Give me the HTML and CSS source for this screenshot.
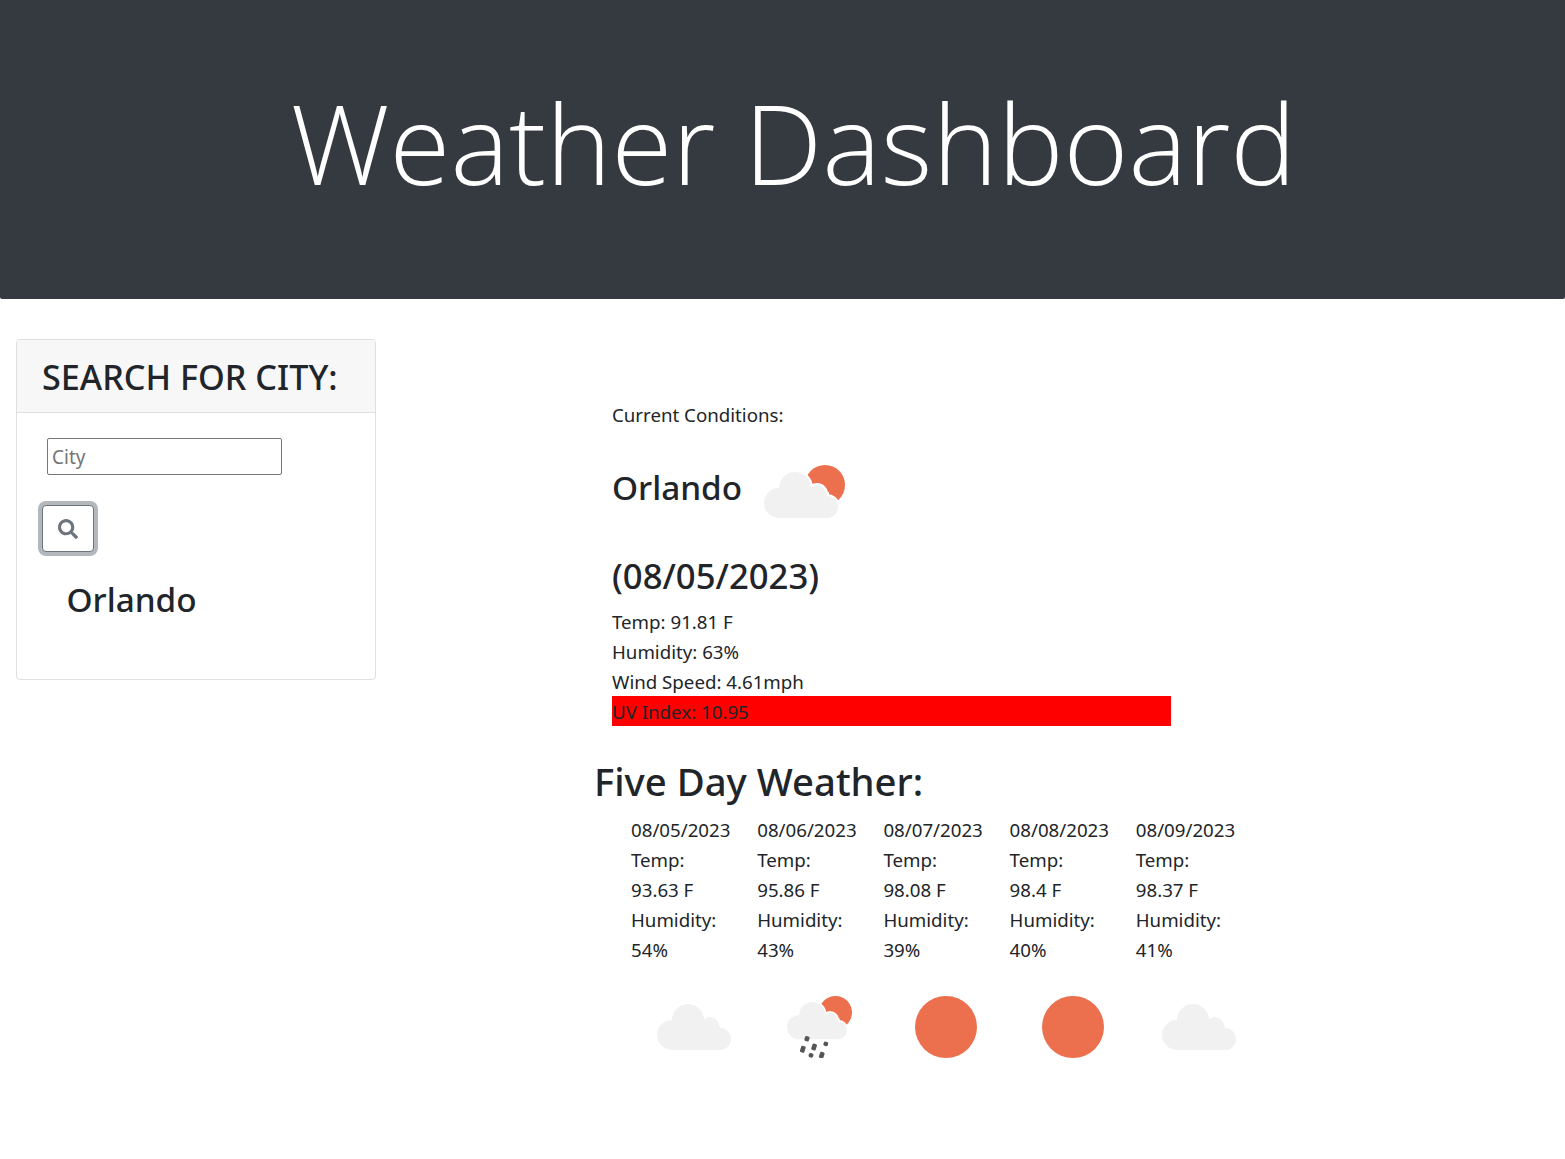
FILE: index.html
```html
<!DOCTYPE html>
<html lang="en">
<head>
  <meta charset="UTF-8">
  <meta name="viewport" content="width=device-width, initial-scale=1.0">
  <title>Weather Dashboard</title>
  <link rel="stylesheet" href="styles.css">
</head>
<body>
  <!-- Shared icon shapes -->
  <svg class="defs" aria-hidden="true">
    <symbol id="cloud" viewBox="-3 -3 80 52" overflow="visible">
      <circle cx="15" cy="31" r="15"/>
      <circle cx="31" cy="16" r="16"/>
      <circle cx="53" cy="22" r="9"/>
      <circle cx="63" cy="35" r="11"/>
      <rect x="15" y="22" width="48" height="24"/>
    </symbol>
  </svg>

  <header class="banner">
    <h1>Weather Dashboard</h1>
  </header>

  <main class="layout">
    <!-- Search panel -->
    <aside class="card">
      <h2 class="card-header">SEARCH FOR CITY:</h2>
      <div class="card-body">
        <input class="city-input" type="text" placeholder="City">
        <button class="search-btn" type="button" aria-label="Search">
          <svg viewBox="0 0 512 512" width="20" height="20"><path fill="#6c757d" d="M505 442.7L405.3 343c-4.5-4.5-10.6-7-17-7H372c27.6-35.3 44-79.7 44-128C416 93.1 322.9 0 208 0S0 93.1 0 208s93.1 208 208 208c48.3 0 92.7-16.4 128-44v16.3c0 6.4 2.5 12.5 7 17l99.7 99.7c9.4 9.4 24.6 9.4 33.9 0l28.3-28.3c9.4-9.4 9.4-24.6.1-34zM208 336c-70.7 0-128-57.2-128-128 0-70.7 57.2-128 128-128 70.7 0 128 57.2 128 128 0 70.7-57.2 128-128 128z"/></svg>
        </button>
        <h2 class="saved-city">Orlando</h2>
      </div>
    </aside>

    <section class="weather">
      <!-- Current conditions -->
      <div class="current">
        <p>Current Conditions:</p>
        <div class="city-row">
          <h2>Orlando</h2>
          <svg class="icon-current" viewBox="0 0 82 54" width="82" height="54">
            <circle class="sun" cx="61" cy="20" r="20"/>
            <use class="halo" href="#cloud" x="-3" y="4" width="80" height="52"/>
            <use class="cloud" href="#cloud" x="-3" y="4" width="80" height="52"/>
          </svg>
        </div>
        <h2 class="current-date">(08/05/2023)</h2>
        <p>Temp: 91.81 F</p>
        <p>Humidity: 63%</p>
        <p>Wind Speed: 4.61mph</p>
        <p class="uv">UV Index: 10.95</p>
      </div>

      <!-- Forecast -->
      <h2 class="forecast-title">Five Day Weather:</h2>
      <div class="forecast">
        <div class="day">
          <p>08/05/2023</p><p>Temp:</p><p>93.63 F</p><p>Humidity:</p><p>54%</p>
          <div class="day-icon">
            <svg viewBox="0 0 74 46" width="74" height="46"><use class="cloud" href="#cloud" x="-3" y="-3" width="80" height="52"/></svg>
          </div>
        </div>
        <div class="day">
          <p>08/06/2023</p><p>Temp:</p><p>95.86 F</p><p>Humidity:</p><p>43%</p>
          <div class="day-icon">
            <svg viewBox="0 0 66 63" width="66" height="63">
              <circle class="sun" cx="48.5" cy="16.5" r="16.5"/>
              <use class="halo" href="#cloud" x="-2.4" y="3.6" width="64.8" height="42"/>
              <use class="cloud" href="#cloud" x="-2.4" y="3.6" width="64.8" height="42"/>
              <g class="rain">
                <rect x="17.6" y="40.3" width="4.6" height="5" rx="1.2" transform="rotate(18 20 43)"/>
                <rect x="13.6" y="50" width="4.6" height="6.6" rx="1.2" transform="rotate(18 16 53)"/>
                <rect x="24.8" y="47.7" width="4.6" height="6.6" rx="1.2" transform="rotate(18 27 51)"/>
                <rect x="36.5" y="45.8" width="4.6" height="4.4" rx="1.6" transform="rotate(18 39 48)"/>
                <rect x="21.8" y="57.1" width="4.6" height="4.4" rx="1.6" transform="rotate(18 24 59)"/>
                <rect x="32.5" y="56" width="4.6" height="6.4" rx="1.2" transform="rotate(18 35 59)"/>
              </g>
            </svg>
          </div>
        </div>
        <div class="day">
          <p>08/07/2023</p><p>Temp:</p><p>98.08 F</p><p>Humidity:</p><p>39%</p>
          <div class="day-icon">
            <svg viewBox="0 0 62 62" width="62" height="62"><circle class="sun" cx="31" cy="31" r="31"/></svg>
          </div>
        </div>
        <div class="day">
          <p>08/08/2023</p><p>Temp:</p><p>98.4 F</p><p>Humidity:</p><p>40%</p>
          <div class="day-icon">
            <svg viewBox="0 0 62 62" width="62" height="62"><circle class="sun" cx="31" cy="31" r="31"/></svg>
          </div>
        </div>
        <div class="day">
          <p>08/09/2023</p><p>Temp:</p><p>98.37 F</p><p>Humidity:</p><p>41%</p>
          <div class="day-icon">
            <svg viewBox="0 0 74 46" width="74" height="46"><use class="cloud" href="#cloud" x="-3" y="-3" width="80" height="52"/></svg>
          </div>
        </div>
      </div>
    </section>
  </main>
</body>
</html>
```

FILE: styles.css
```css
/* General styles */
body {
  margin: 0;
  font-family: "Noto Sans", "Open Sans", Arial, sans-serif;
  font-size: 18.7px;
  line-height: 30px;
  color: #212529;
  background-color: #fff;
}

h1,
h2,
p {
  margin: 0;
}

h2 {
  font-size: 33.3px;
  font-weight: 500;
  line-height: 38px;
}

.defs {
  position: absolute;
  width: 0;
  height: 0;
}

/* Banner */
.banner {
  height: 299px;
  display: flex;
  justify-content: center;
  background-color: #343a40;
  border-radius: 0 0 2px 2px;
}

.banner h1 {
  margin: 75px 0 0 22px;
  font-family: "Open Sans", sans-serif;
  font-size: 110.7px;
  font-weight: 300;
  line-height: 134px;
  color: #fff;
}

/* Page columns */
.layout {
  display: flex;
  align-items: flex-start;
  padding: 40px 0 0 16px;
}

/* Search panel */
.card {
  width: 360px;
  height: 341px;
  box-sizing: border-box;
  border: 1px solid #dfdfdf;
  border-radius: 4px;
}

.card-header {
  padding: 18px 25px 16px;
  font-size: 34.2px;
  background-color: #f7f7f7;
  border-bottom: 1px solid #dfdfdf;
  border-radius: 3px 3px 0 0;
}

.card-body {
  padding: 25px 0 0 21px;
}

.city-input {
  display: block;
  width: 235px;
  height: 37px;
  box-sizing: border-box;
  margin-left: 9px;
  padding: 0 4px;
  border: 1px solid #767676;
  border-radius: 2px;
  font-family: inherit;
  font-size: 19px;
}

.city-input::placeholder {
  color: #757575;
}

.search-btn {
  display: flex;
  align-items: center;
  justify-content: center;
  width: 52px;
  height: 47px;
  margin: 30px 0 0 4px;
  padding: 0;
  background: #fff;
  border: 1px solid #6c757d;
  border-radius: 4px;
  box-shadow: 0 0 0 4px #b3b8bd;
}

.saved-city {
  margin: 28px 0 0 28.5px;
}

/* Weather column */
.weather {
  margin-left: 218px;
  flex: none;
  width: 660px;
}

.current {
  width: 559px;
  margin-left: 18px;
  padding-top: 61px;
}

.city-row {
  display: flex;
  align-items: flex-start;
  gap: 22px;
  margin-top: 35px;
  height: 54px;
}

.city-row h2 {
  margin-top: 3px;
}

.current-date {
  margin: 38px 0 12px;
  font-size: 34.7px;
}

/* Bar starts a pixel above its line of text */
.uv {
  height: 30px;
  box-sizing: border-box;
  margin-top: -1px;
  padding-top: 1px;
  background-color: #f00;
}

.forecast-title {
  margin-top: 32px;
  font-size: 38.3px;
  line-height: 46px;
}

/* Forecast cards */
.forecast {
  display: flex;
  margin: 11px 0 0 37px;
}

.day {
  width: 126.2px;
  flex: none;
}

.day-icon {
  display: flex;
  align-items: center;
  justify-content: center;
  height: 62px;
  margin-top: 31px;
}

/* Icon colours */
.sun {
  fill: #ec6f4e;
}

.cloud {
  fill: #f1f1f1;
}

.halo {
  fill: #fff;
  stroke: #fff;
  stroke-width: 4px;
}

.rain {
  fill: #555;
}
```
